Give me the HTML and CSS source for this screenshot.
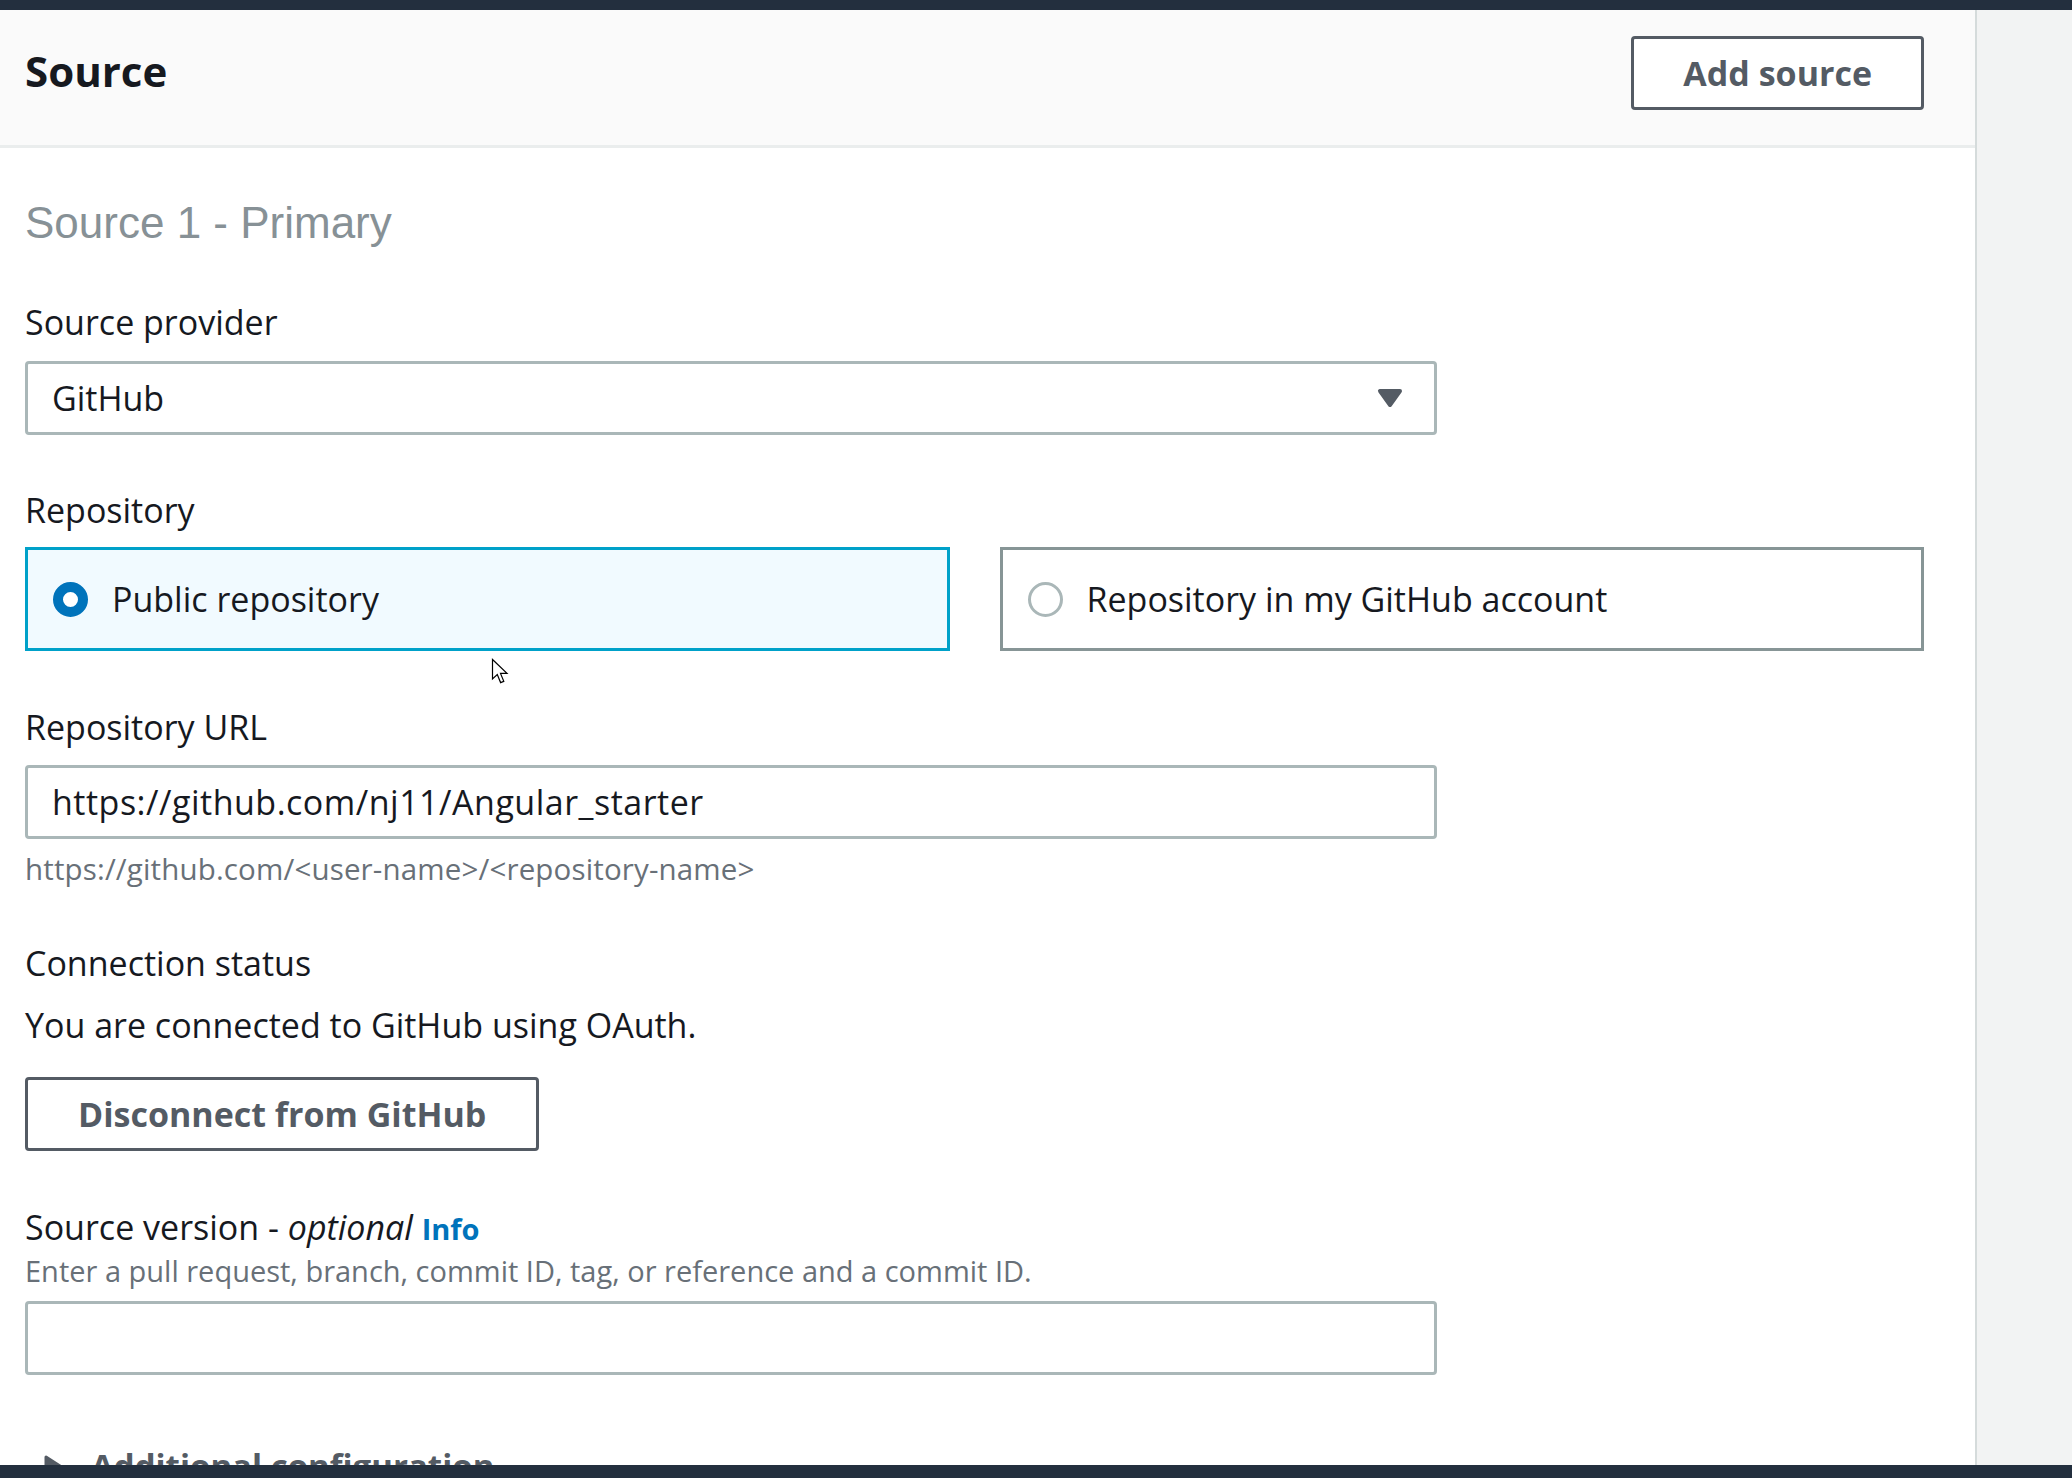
FILE: index.html
```html
<!DOCTYPE html>
<html lang="en">
<head>
<meta charset="utf-8">
<title>Source</title>
<link rel="stylesheet" href="styles.css">
</head>
<body>
<div class="app">
  <div class="topbar"></div>
  <div class="layout">
    <main class="panel">
      <div class="panel-header">
        <h2 class="panel-title">Source</h2>
        <button class="btn">Add source</button>
      </div>
      <div class="panel-body">
        <h3 class="section-title">Source 1 - Primary</h3>

        <div class="field">
          <div class="label">Source provider</div>
          <div class="input select control">
            <span>GitHub</span>
            <svg class="caret" width="26" height="20" viewBox="0 0 26 20"><path d="M3 3 H23 L13 17 Z" fill="#545b64" stroke="#545b64" stroke-width="4" stroke-linejoin="round"/></svg>
          </div>
        </div>

        <div class="field field-repo">
          <div class="label">Repository</div>
          <div class="tiles">
            <div class="tile selected"><span class="radio checked"></span><span>Public repository</span></div>
            <div class="tile"><span class="radio"></span><span>Repository in my GitHub account</span></div>
          </div>
        </div>

        <div class="field">
          <div class="label">Repository URL</div>
          <div class="input control url">https://github.com/nj11/Angular_starter</div>
          <div class="hint">https://github.com/&lt;user-name&gt;/&lt;repository-name&gt;</div>
        </div>

        <div class="field field-tight">
          <div class="label">Connection status</div>
          <div class="text">You are connected to GitHub using OAuth.</div>
          <button class="btn btn-spaced">Disconnect from GitHub</button>
        </div>

        <div class="field field-wide">
          <div class="label">Source version - <i>optional</i> <a class="info">Info</a></div>
          <div class="desc">Enter a pull request, branch, commit ID, tag, or reference and a commit ID.</div>
          <div class="input input-after-desc"></div>
        </div>

        <div class="expand">
          <svg width="20" height="24" viewBox="0 0 20 24"><path d="M3 3 L17 12 L3 21 Z" fill="#545b64" stroke="#545b64" stroke-width="3" stroke-linejoin="round"/></svg>
          <span>Additional configuration</span>
        </div>
      </div>

      <svg class="cursor" width="19" height="27" viewBox="0 0 19 27"><path d="M1.5 1.5 L1.5 21 L6.3 16.6 L9.6 24.6 L12.8 23.3 L9.5 15.4 L16 15.4 Z" fill="#fff" stroke="#000" stroke-width="1.2" stroke-linejoin="miter"/></svg>
    </main>
    <aside class="side"></aside>
  </div>
  <div class="bottombar"></div>
</div>
</body>
</html>
```

FILE: styles.css
```css
* { box-sizing: border-box; }

html, body {
  margin: 0;
  padding: 0;
}

body {
  font-family: "Open Sans", "Noto Sans", sans-serif;
  color: #16191f;
  background: #f2f3f3;
}

.app {
  width: 2072px;
  height: 1478px;
  display: flex;
  flex-direction: column;
  overflow: hidden;
}

.topbar {
  flex: none;
  height: 10px;
  background: #232f3e;
}

.bottombar {
  flex: none;
  height: 13px;
  background: #232f3e;
}

.layout {
  flex: 1;
  min-height: 0;
  display: flex;
  overflow: hidden;
}

.panel {
  position: relative;
  flex: none;
  width: 1977px;
  background: #ffffff;
  border-right: 2px solid #d5dbdb;
}

.side {
  flex: 1;
  background: #f2f3f3;
}

.panel-header {
  display: flex;
  align-items: center;
  justify-content: space-between;
  padding: 26px 51px 35px 25px;
  background: #fafafa;
  border-bottom: 3px solid #eaeded;
}

.panel-title {
  margin: -5px 0 0;
  font-size: 42px;
  font-weight: 700;
  line-height: 73px;
  color: #16191f;
}

.btn {
  display: block;
  height: 74px;
  padding: 0 49px;
  border: 3px solid #545b64;
  border-radius: 4px;
  background: #ffffff;
  color: #545b64;
  font-family: "Open Sans", "Noto Sans", sans-serif;
  font-size: 34px;
  font-weight: 700;
  line-height: 1;
}

.btn-spaced {
  margin-top: 30px;
  padding: 0 50px;
}

.panel-body {
  padding: 50px 51px 0 25px;
}

.section-title {
  margin: 0 0 50px;
  font-family: "Liberation Sans", Arial, sans-serif;
  font-weight: 400;
  font-size: 44px;
  line-height: 50px;
  color: #879196;
}

.field + .field {
  margin-top: 52px;
}

.field + .field-repo {
  margin-top: 51px;
}

.field + .field-tight {
  margin-top: 50px;
}

.field + .field-wide {
  margin-top: 52px;
}

.label {
  padding-top: 2px;
  font-size: 34px;
  line-height: 44px;
  color: #16191f;
}

.label i {
  font-style: italic;
}

.info {
  font-size: 29px;
  font-weight: 700;
  color: #0073bb;
  text-decoration: none;
}

.control {
  margin-top: 16px;
}

.select.control {
  margin-top: 17px;
}

.input {
  display: flex;
  align-items: center;
  width: 1412px;
  height: 74px;
  padding: 0 31px 0 24px;
  border: 3px solid #aab7b8;
  border-radius: 4px;
  background: #ffffff;
  font-size: 34px;
  color: #16191f;
}

.url {
  letter-spacing: 0.5px;
}

.select {
  justify-content: space-between;
}

.caret {
  flex: none;
}

.hint {
  margin-top: 10px;
  font-size: 29.5px;
  line-height: 40px;
  letter-spacing: 0.15px;
  color: #687078;
}

.desc {
  margin-top: 0;
  font-size: 29px;
  line-height: 40px;
  color: #687078;
}

.input-after-desc {
  margin-top: 10px;
}

.text {
  margin-top: 18px;
  font-size: 34px;
  line-height: 44px;
}

.tiles {
  display: grid;
  grid-template-columns: 1fr 1fr;
  column-gap: 50px;
  margin-top: 15px;
}

.tile {
  display: flex;
  align-items: center;
  gap: 24px;
  height: 104px;
  padding-left: 25px;
  border: 3px solid #879596;
  background: #ffffff;
  font-size: 34px;
}

.tile.selected {
  border-color: #00a1c9;
  background: #f1faff;
}

.radio {
  flex: none;
  width: 35px;
  height: 35px;
  border-radius: 50%;
  border: 3px solid #aab7b8;
  background: #ffffff;
}

.radio.checked {
  border: 10px solid #0073bb;
}

.expand {
  display: flex;
  align-items: center;
  gap: 28px;
  margin-top: 69px;
  padding-left: 18px;
  font-size: 33px;
  font-weight: 700;
  line-height: 44px;
  color: #545b64;
}

.cursor {
  position: absolute;
  left: 491px;
  top: 648px;
}
```
